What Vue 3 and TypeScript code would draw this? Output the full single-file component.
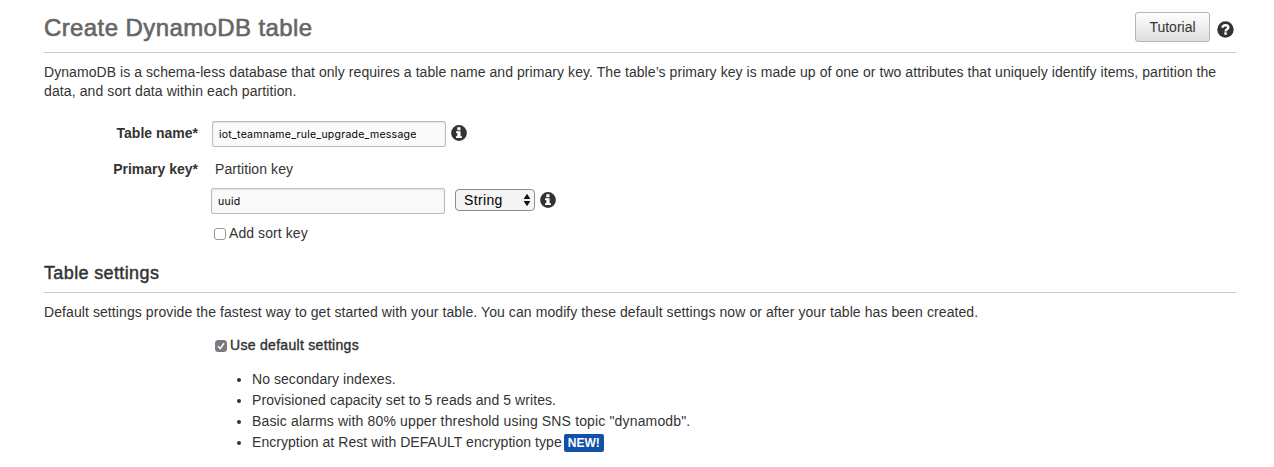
<script setup lang="ts">
import { ref } from 'vue'

const tableName = ref<string>('iot_teamname_rule_upgrade_message')
const partitionKey = ref<string>('uuid')
const sortKey = ref<boolean>(false)
const useDefaults = ref<boolean>(true)

interface Setting {
  text: string
  cls: string
  isNew?: boolean
}

const settings: Setting[] = [
  { text: 'No secondary indexes.', cls: 's1' },
  { text: 'Provisioned capacity set to 5 reads and 5 writes.', cls: 's2' },
  { text: 'Basic alarms with 80% upper threshold using SNS topic "dynamodb".', cls: 's3' },
  { text: 'Encryption at Rest with DEFAULT encryption type', cls: 's4', isNew: true },
]
</script>

<template>
  <main class="page">
    <header class="header">
      <h1><span>Create DynamoDB table</span></h1>
      <div class="actions">
        <button class="tutorial" type="button">Tutorial</button>
        <svg class="help" viewBox="0 0 17 17" width="17" height="17">
          <circle cx="8.5" cy="8.5" r="8.2" fill="#333" />
          <path d="M5.5 6.8C5.6 5 6.8 4.2 8.5 4.2s2.8 .9 2.8 2.3c0 1.9-2.7 1.8-2.7 3.9" fill="none" stroke="#fff" stroke-width="2.4" />
          <rect x="7.3" y="11.3" width="2.5" height="2.4" fill="#fff" />
        </svg>
      </div>
    </header>

    <p class="intro">
      <span class="i1">DynamoDB is a schema-less database that only requires a table name and primary key. The table’s primary key is made up of one or two attributes that uniquely identify items, partition the</span><br />
      <span class="i2">data, and sort data within each partition.</span>
    </p>

    <section class="form">
      <div class="row name-row">
        <label class="label"><span class="l1">Table name*</span></label>
        <input v-model="tableName" class="field" type="text" />
        <svg class="info" viewBox="0 0 16 16" width="16" height="16">
          <circle cx="8" cy="8" r="7.9" fill="#333" />
          <path d="M6.3 2.3h3.2v2.9H6.3zM5 6.2h4.6v5.1h1.3v1.8H5v-1.8h1.3V8H5z" fill="#fff" />
        </svg>
      </div>
      <div class="row key-row">
        <span class="label"><span class="l2">Primary key*</span></span>
        <span class="sub"><span class="l3">Partition key</span></span>
      </div>
      <div class="row value-row">
        <input v-model="partitionKey" class="field" type="text" />
        <div class="select">
          <span class="l4">String</span>
          <svg viewBox="0 0 8 14" width="8" height="14">
            <path d="M4 .8L7.4 6H.6zM4 13.2L.6 8h6.8z" fill="#111" />
          </svg>
        </div>
        <svg class="info" viewBox="0 0 16 16" width="16" height="16">
          <circle cx="8" cy="8" r="7.9" fill="#333" />
          <path d="M6.3 2.3h3.2v2.9H6.3zM5 6.2h4.6v5.1h1.3v1.8H5v-1.8h1.3V8H5z" fill="#fff" />
        </svg>
      </div>
      <label class="row sort-row">
        <input v-model="sortKey" class="check" type="checkbox" />
        <span class="l5">Add sort key</span>
      </label>
    </section>

    <h2><span>Table settings</span></h2>
    <p class="note"><span class="i3">Default settings provide the fastest way to get started with your table. You can modify these default settings now or after your table has been created.</span></p>

    <label class="row default-row">
      <input v-model="useDefaults" class="check" type="checkbox" />
      <span class="medium l6">Use default settings</span>
    </label>
    <ul>
      <li v-for="item in settings" :key="item.cls">
        <span :class="item.cls">{{ item.text }}</span>
        <b v-if="item.isNew" class="badge">NEW!</b>
      </li>
    </ul>
  </main>
</template>

<style>
body {
  background: #fff;
}
</style>

<style scoped>
* {
  box-sizing: border-box;
}
.page {
  height: 467px;
  padding: 0 38px 0 44px;
  overflow: hidden;
  background: #fff;
  color: #333;
  font: 14px/19px "Liberation Sans", Arial, sans-serif;
}
span {
  white-space: nowrap;
}
.header {
  display: flex;
  justify-content: space-between;
  height: 53px;
  border-bottom: 1px solid #ccc;
}
h1 {
  margin: 13px 0 0;
  color: #666;
  font-size: 24px;
  font-weight: 400;
  line-height: 30px;
  -webkit-text-stroke: 0.6px #666;
  letter-spacing: 0.4px;
}
.actions {
  display: flex;
  align-items: flex-start;
  padding: 12px 2.5px 0 0;
}
.tutorial {
  width: 75px;
  height: 30px;
  padding: 0;
  border: 1px solid #b5b5b5;
  border-radius: 3px;
  background: linear-gradient(#fff, #dedede);
  color: #333;
  font: 14px "Liberation Sans", Arial, sans-serif;
}
.help {
  margin: 9px 0 0 6.5px;
}
.intro {
  margin: 10px 0 0;
}
.i1 {
  letter-spacing: 0.064px;
}
.i2 {
  letter-spacing: 0.1px;
}
.i3 {
  letter-spacing: 0.084px;
}
.row {
  display: flex;
  align-items: center;
}
.form {
  margin-top: 20px;
}
.label {
  width: 154px;
  text-align: right;
  font-weight: 700;
}
.field {
  width: 234px;
  height: 26px;
  padding: 0 6px;
  border: 1px solid #bbb;
  border-radius: 2px;
  outline: 0;
  background: #fafafa;
  box-shadow: inset 0 1px 2px #e2e2e2;
  color: #000;
  font: 10.5px Inter, sans-serif;
  letter-spacing: 0.25px;
}
.name-row .field {
  margin-left: 14px;
}
.name-row .info {
  margin-left: 5px;
}
.name-row .label,
.name-row .info {
  position: relative;
  top: -1px;
}
.key-row {
  height: 19px;
  margin-top: 13px;
}
.sub {
  margin-left: 17px;
}
.l3,
.l5 {
  letter-spacing: 0.08px;
}
.l4 {
  letter-spacing: 0.35px;
}
.value-row {
  margin: 9px 0 0 167px;
}
.select {
  display: flex;
  align-items: center;
  justify-content: space-between;
  width: 80px;
  height: 22px;
  margin: 0 5px 0 10px;
  padding: 0 3px 0 8px;
  border: 1px solid #8c8c8c;
  border-radius: 4px;
  background: #f5f5f5;
  color: #000;
}
.value-row .info,
.select {
  position: relative;
  top: -1px;
}
.check {
  appearance: none;
  flex: none;
  width: 12px;
  height: 12px;
  margin: 0;
  border: 1px solid #999;
  border-radius: 3px;
  background: #fff;
}
.check:checked {
  border-color: #7c7a80;
  background: #7c7a80 url("data:image/svg+xml,%3Csvg xmlns='http://www.w3.org/2000/svg' viewBox='0 0 10 10'%3E%3Cpath d='M2 5.3l2.2 2.3L8 2.2' fill='none' stroke='white' stroke-width='1.5'/%3E%3C/svg%3E") center / 10px 10px no-repeat;
}
.sort-row {
  height: 19px;
  margin: 10px 0 0 170px;
}
.sort-row span {
  margin-left: 3px;
}
h2 {
  height: 30px;
  margin: 20px 0 0;
  border-bottom: 1px solid #ccc;
  font-size: 18px;
  font-weight: 400;
  line-height: 20px;
  letter-spacing: 0.37px;
  -webkit-text-stroke: 0.45px #333;
}
.note {
  margin: 10px 0 0;
}
.default-row {
  height: 19px;
  margin: 14px 0 0 171px;
}
.default-row span {
  margin-left: 3px;
}
.medium {
  letter-spacing: 0.3px;
  -webkit-text-stroke: 0.4px #333;
}
ul {
  margin: 14px 0 0 208px;
  padding: 0;
}
li {
  height: 21px;
  line-height: 21px;
}
.s1 {
  letter-spacing: 0.06px;
}
.s2 {
  letter-spacing: 0.075px;
}
.s3 {
  letter-spacing: 0.15px;
}
.s4 {
  letter-spacing: 0.045px;
}
.badge {
  display: inline-block;
  height: 18px;
  margin-left: 2px;
  padding: 0 4px;
  border-radius: 2px;
  background: #1150ab;
  color: #fff;
  font-size: 12px;
  line-height: 18px;
}
</style>
